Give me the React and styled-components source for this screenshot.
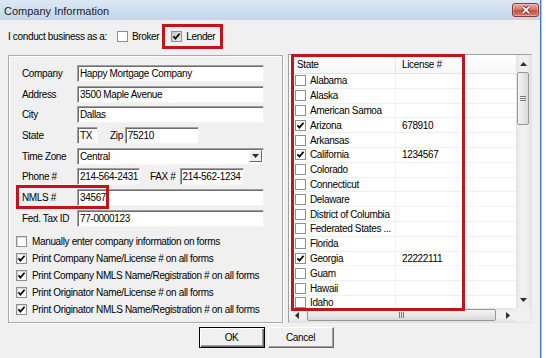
import React from "react";
import styled, { createGlobalStyle } from "styled-components";

const GlobalStyle = createGlobalStyle`
  html, body {
    margin: 0;
    padding: 0;
    background: #ffffff;
  }
  body {
    width: 546px;
    height: 358px;
    overflow: hidden;
  }
`;

const uiFont = `"Liberation Sans", Arial, sans-serif`;

const Window = styled.div`
  width: 541px;
  height: 358px;
  box-sizing: border-box;
  border-right: 1px solid #3e7cbc;
  box-shadow: 1px 0 0 #aac8e8;
  background: #f0f0f0;
  display: flex;
  flex-direction: column;
  font-family: ${uiFont};
  font-size: 10px;
  letter-spacing: -0.35px;
  color: #000;
  overflow: hidden;
`;

const TitleBar = styled.div`
  height: 20px;
  flex: none;
  display: flex;
  align-items: center;
  justify-content: space-between;
  padding: 0 1px 0 4px;
  background: linear-gradient(#dde8f5, #c3d6ec);
  font-family: "Liberation Sans", Arial, sans-serif;
  font-size: 11px;
  letter-spacing: 0;
  color: #1c1c1c;
`;

const TitleText = styled.span`
  padding-top: 1px;
`;

const CloseButton = styled.div`
  width: 27px;
  height: 14px;
  box-sizing: border-box;
  border: 1px solid #8a3b31;
  border-radius: 3px;
  background: linear-gradient(#eaa99b, #d57c69 45%, #c4503d 55%, #d9836e);
  box-shadow: inset 0 0 0 1px rgba(255, 255, 255, 0.3);
  display: flex;
  align-items: center;
  justify-content: center;
`;

const Body = styled.div`
  flex: 1;
  display: flex;
  flex-direction: column;
  padding: 0 8px;
`;

const BusinessRow = styled.div`
  height: 33px;
  flex: none;
  display: flex;
  align-items: center;
`;

const Option = styled.label`
  display: flex;
  align-items: center;
  gap: 4px;
  margin-left: ${(p) => p.$left || 0}px;
`;

const Highlight = styled.div`
  display: flex;
  align-items: center;
  height: 25px;
  box-sizing: border-box;
  border: 3px solid #c3141b;
  padding: 0 5px 0 6px;
  margin-left: 3px;
`;

const Marker = styled.div`
  position: absolute;
  left: ${(p) => p.$x}px;
  top: ${(p) => p.$y}px;
  width: ${(p) => p.$w}px;
  height: ${(p) => p.$h}px;
  box-sizing: border-box;
  border: 3px solid #c3141b;
  pointer-events: none;
  z-index: 2;
`;

const Main = styled.div`
  display: flex;
  align-items: flex-start;
  gap: 5px;
  height: 269px;
  margin-top: 1px;
  flex: none;
`;

const GroupBox = styled.div`
  width: 276px;
  height: 268px;
  margin-top: 1px;
  box-sizing: border-box;
  border: 1px solid #a9a9a9;
  box-shadow: inset 1px 1px 0 #fff, 1px 1px 0 #fff;
  padding: 7px 18px 0 7px;
  display: flex;
  flex-direction: column;
`;

const FormRow = styled.div`
  position: relative;
  height: 20.7px;
  display: flex;
  align-items: center;
  padding-left: 6px;
`;

const Label = styled.span`
  width: 55px;
  flex: none;
  white-space: nowrap;
`;

const InlineLabel = styled.span`
  margin-left: ${(p) => p.$left}px;
  margin-right: ${(p) => p.$right}px;
  white-space: nowrap;
`;

const Field = styled.div`
  height: 17px;
  box-sizing: border-box;
  flex: ${(p) => (p.$w ? `0 0 ${p.$w}px` : "1")};
  background: #fff;
  border: 1px solid;
  border-color: #a0a0a0 #f4f4f4 #f4f4f4 #a0a0a0;
  box-shadow: inset 1px 1px 0 #6d6d6d;
  padding-left: 2px;
  display: flex;
  align-items: center;
  white-space: nowrap;
  overflow: hidden;
`;

const FieldText = styled.span`
  flex: 1;
`;

const DropButton = styled.div`
  width: 13px;
  height: 12px;
  margin-right: 1px;
  box-sizing: border-box;
  background: #f0f0f0;
  border: 1px solid;
  border-color: #fff #696969 #696969 #fff;
  display: flex;
  align-items: center;
  justify-content: center;
`;

const CheckList = styled.div`
  margin-top: 4px;
  display: flex;
  flex-direction: column;
`;

const CheckRow = styled.label`
  height: 17px;
  display: flex;
  align-items: center;
  gap: 5px;
  white-space: nowrap;
`;

const Box = styled.span`
  width: ${(p) => p.$size}px;
  height: ${(p) => p.$size}px;
  flex: none;
  box-sizing: border-box;
  border: 1px solid #8e8f8f;
  background: ${(p) => (p.$shaded ? "linear-gradient(135deg, #c9c9c9, #e6e6e6)" : "#fff")};
  box-shadow: ${(p) => (p.$sunken ? "inset 1px 1px 0 #d8d8d8" : "none")};
  display: inline-flex;
  align-items: center;
  justify-content: center;
`;

const ListFrame = styled.div`
  position: relative;
  width: 245px;
  height: 269px;
  box-sizing: border-box;
  border: 1px solid;
  border-color: #a0a0a0 #e3e3e3 #e3e3e3 #a0a0a0;
  background: #fff;
  display: grid;
  grid-template-columns: 1fr 15px;
  grid-template-rows: 1fr 14px;
`;

const Table = styled.div`
  overflow: hidden;
`;

const HeaderRow = styled.div`
  display: grid;
  grid-template-columns: 107px 121px;
  height: 19px;
  background: linear-gradient(#ffffff, #f6f7f9);
  border-bottom: 1px solid #e2e4e8;
  box-sizing: border-box;
`;

const HeaderCell = styled.div`
  display: flex;
  align-items: center;
  padding-left: ${(p) => p.$pad}px;
  border-right: 1px solid #e2e4e8;
`;

const Row = styled.div`
  display: grid;
  grid-template-columns: 107px 121px;
  height: 14.8px;
  box-sizing: border-box;
  border-bottom: 1px solid #f0f0f0;
`;

const StateCell = styled.div`
  display: flex;
  align-items: center;
  gap: 4px;
  padding-left: 6px;
  border-right: 1px solid #f0f0f0;
  white-space: nowrap;
  overflow: hidden;
`;

const LicenseCell = styled.div`
  display: flex;
  align-items: center;
  padding-left: 6px;
`;

const VScroll = styled.div`
  grid-row: 1;
  grid-column: 2;
  background: linear-gradient(90deg, #e3e3e3, #f0f0f0 30%, #f0f0f0 70%, #e3e3e3);
  display: flex;
  flex-direction: column;
`;

const HScroll = styled.div`
  grid-row: 2;
  grid-column: 1;
  background: linear-gradient(#e3e3e3, #f0f0f0 30%, #f0f0f0 70%, #e3e3e3);
  display: flex;
`;

const Corner = styled.div`
  background: #f0f0f0;
`;

const Arrow = styled.div`
  flex: 0 0 17px;
  display: flex;
  align-items: center;
  justify-content: center;
`;

const Spacer = styled.div`
  flex: 1;
`;

const Thumb = styled.div`
  box-sizing: border-box;
  border: 1px solid #979797;
  border-radius: 2px;
  display: flex;
  align-items: center;
  justify-content: center;
  ${(p) =>
    p.$vertical
      ? `height: 53px; margin: 0 2px 0 1px; background: linear-gradient(90deg, #f3f3f3, #e8e8e8 50%, #d8d8d8);`
      : `width: 189px; margin: 1px 0 1px 1px; background: linear-gradient(#f3f3f3, #e8e8e8 50%, #d8d8d8);`}
`;

const ButtonRow = styled.div`
  display: flex;
  justify-content: center;
  gap: 3px;
  padding-right: 8px;
  margin-top: 4px;
`;

const Button = styled.div`
  width: 66px;
  height: 21px;
  box-sizing: border-box;
  display: flex;
  align-items: center;
  justify-content: center;
  background: #f0f0f0;
  border: 1px solid;
  border-color: ${(p) => (p.$primary ? "#000" : "#fff #696969 #696969 #fff")};
  box-shadow: ${(p) =>
    p.$primary
      ? "inset 1px 1px 0 #fff, inset -1px -1px 0 #696969, inset -2px -2px 0 #a0a0a0"
      : "inset -1px -1px 0 #a0a0a0"};
`;

const states = [
  { name: "Alabama" },
  { name: "Alaska" },
  { name: "American Samoa" },
  { name: "Arizona", on: true, license: "678910" },
  { name: "Arkansas" },
  { name: "California", on: true, license: "1234567" },
  { name: "Colorado" },
  { name: "Connecticut" },
  { name: "Delaware" },
  { name: "District of Columbia" },
  { name: "Federated States ..." },
  { name: "Florida" },
  { name: "Georgia", on: true, license: "22222111" },
  { name: "Guam" },
  { name: "Hawaii" },
  { name: "Idaho" },
];

const printOptions = [
  { text: "Manually enter company information on forms", on: false },
  { text: "Print Company Name/License # on all forms", on: true },
  { text: "Print Company NMLS Name/Registration # on all forms", on: true },
  { text: "Print Originator Name/License # on all forms", on: true },
  { text: "Print Originator NMLS Name/Registration # on all forms", on: true },
];

const Check = ({ on, size = 11, shaded, sunken }) => (
  <Box $size={size} $shaded={shaded} $sunken={sunken}>
    {on && (
      <svg width="9" height="9" viewBox="0 0 9 9">
        <polyline points="1.4,4.2 3.4,6.6 7.6,1.8" fill="none" stroke="#000" strokeWidth="1.7" />
      </svg>
    )}
  </Box>
);

const Tri = ({ dir }) => {
  const pts = {
    up: "0,4 3.5,0 7,4",
    down: "0,0 7,0 3.5,4",
    left: "4,0 4,7 0,3.5",
    right: "0,0 0,7 4,3.5",
  }[dir];
  const vertical = dir === "up" || dir === "down";
  return (
    <svg width={vertical ? 7 : 4} height={vertical ? 4 : 7}>
      <polygon points={pts} fill="#2b2b2b" />
    </svg>
  );
};

const Grip = ({ vertical }) =>
  vertical ? (
    <svg width="6" height="5">
      <path d="M0 0.5H6M0 2.5H6M0 4.5H6" stroke="#7a7a7a" strokeWidth="1" />
    </svg>
  ) : (
    <svg width="5" height="6">
      <path d="M0.5 0V6M2.5 0V6M4.5 0V6" stroke="#7a7a7a" strokeWidth="1" />
    </svg>
  );

const App = () => (
  <>
    <GlobalStyle />
    <Window>
      <TitleBar>
        <TitleText>Company Information</TitleText>
        <CloseButton>
          <svg width="12" height="10" viewBox="0 0 12 10">
            <path d="M2.8 1.8L9.2 8.2M9.2 1.8L2.8 8.2" stroke="#6b2a22" strokeWidth="3.4" />
            <path d="M2.8 1.8L9.2 8.2M9.2 1.8L2.8 8.2" stroke="#fff" strokeWidth="1.9" />
          </svg>
        </CloseButton>
      </TitleBar>

      <Body>
        <BusinessRow>
          <span>I conduct business as a:</span>
          <Option $left={10}>
            <Check />
            Broker
          </Option>
          <Highlight>
            <Option>
              <Check on shaded />
              Lender
            </Option>
          </Highlight>
        </BusinessRow>

        <Main>
          <GroupBox>
            <FormRow>
              <Label>Company</Label>
              <Field>Happy Mortgage Company</Field>
            </FormRow>
            <FormRow>
              <Label>Address</Label>
              <Field>3500 Maple Avenue</Field>
            </FormRow>
            <FormRow>
              <Label>City</Label>
              <Field>Dallas</Field>
            </FormRow>
            <FormRow>
              <Label>State</Label>
              <Field $w={21}>TX</Field>
              <InlineLabel $left={12} $right={2}>Zip</InlineLabel>
              <Field $w={74}>75210</Field>
            </FormRow>
            <FormRow>
              <Label>Time Zone</Label>
              <Field>
                <FieldText>Central</FieldText>
                <DropButton>
                  <Tri dir="down" />
                </DropButton>
              </Field>
            </FormRow>
            <FormRow>
              <Label>Phone #</Label>
              <Field $w={63}>214-564-2431</Field>
              <InlineLabel $left={10} $right={4}>FAX #</InlineLabel>
              <Field $w={64}>214-562-1234</Field>
            </FormRow>
            <FormRow>
              <Label>NMLS #</Label>
              <Field>34567</Field>
              <Marker $x={0} $y={-2} $w={93} $h={24} />
            </FormRow>
            <FormRow>
              <Label>Fed. Tax ID</Label>
              <Field>77-0000123</Field>
            </FormRow>

            <CheckList>
              {printOptions.map((o) => (
                <CheckRow key={o.text}>
                  <Check on={o.on} sunken />
                  {o.text}
                </CheckRow>
              ))}
            </CheckList>
          </GroupBox>

          <ListFrame>
            <Table>
              <HeaderRow>
                <HeaderCell $pad={8}>State</HeaderCell>
                <HeaderCell $pad={6}>License #</HeaderCell>
              </HeaderRow>
              {states.map((s) => (
                <Row key={s.name}>
                  <StateCell>
                    <Check on={s.on} />
                    {s.name}
                  </StateCell>
                  <LicenseCell>{s.license}</LicenseCell>
                </Row>
              ))}
            </Table>
            <VScroll>
              <Arrow>
                <Tri dir="up" />
              </Arrow>
              <Thumb $vertical>
                <Grip vertical />
              </Thumb>
              <Spacer />
              <Arrow>
                <Tri dir="down" />
              </Arrow>
            </VScroll>
            <HScroll>
              <Arrow>
                <Tri dir="left" />
              </Arrow>
              <Thumb>
                <Grip />
              </Thumb>
              <Spacer />
              <Arrow>
                <Tri dir="right" />
              </Arrow>
            </HScroll>
            <Corner />
            <Marker $x={2} $y={-1} $w={174} $h={257} />
          </ListFrame>
        </Main>

        <ButtonRow>
          <Button $primary>OK</Button>
          <Button>Cancel</Button>
        </ButtonRow>
      </Body>
    </Window>
  </>
);

export default App;
